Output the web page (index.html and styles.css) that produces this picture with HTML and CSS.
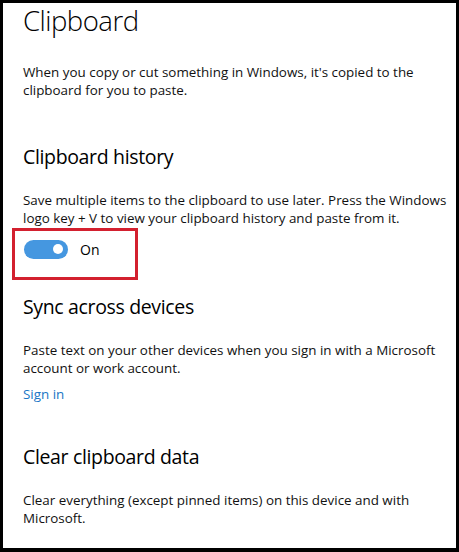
FILE: index.html
```html
<!DOCTYPE html>
<html lang="en">
<head>
<meta charset="utf-8">
<title>Clipboard</title>
<link rel="stylesheet" href="styles.css">
</head>
<body>
<div class="frame">
  <main class="page">
    <h1 class="title">Clipboard</h1>
    <p class="text intro">When you copy or cut something in Windows, it's copied to the clipboard for you to paste.</p>

    <h2 class="heading h-history">Clipboard history</h2>
    <p class="text desc">Save multiple items to the clipboard to use later. Press the Windows logo key + V to view your clipboard history and paste from it.</p>
    <div class="toggle-row">
      <span class="toggle"><span class="knob"></span></span>
      <span class="toggle-label">On</span>
      <span class="highlight"></span>
    </div>

    <h2 class="heading h-sync">Sync across devices</h2>
    <p class="text desc">Paste text on your other devices when you sign in with a Microsoft account or work account.</p>
    <a class="link" href="#">Sign in</a>

    <h2 class="heading h-clear">Clear clipboard data</h2>
    <p class="text desc">Clear everything (except pinned items) on this device and with Microsoft.</p>
  </main>
</div>
</body>
</html>
```
FILE: styles.css
```css
html, body {
  margin: 0;
  padding: 0;
  background: #000;
}
body {
  width: 459px;
  height: 552px;
  overflow: hidden;
  font-family: "Open Sans", "Noto Sans", sans-serif;
  color: #000;
}
.frame {
  box-sizing: border-box;
  width: 459px;
  height: 552px;
  border-style: solid;
  border-color: #000;
  border-width: 3px 3px 4px 3px;
  background: #fff;
  overflow: hidden;
}
.page {
  padding: 0 0 0 20px;
  display: flex;
  flex-direction: column;
  align-items: flex-start;
}
.title {
  margin: 0;
  font-size: 27.5px;
  line-height: 36px;
  font-weight: 300;
  letter-spacing: -0.5px;
}
.text {
  margin: 0;
  max-width: 426px;
  font-size: 13.4px;
  line-height: 18px;
  font-weight: 400;
  color: #111;
}
.intro { margin-top: 24px; }
.heading {
  margin: 0;
  font-size: 19.5px;
  line-height: 26px;
  font-weight: 400;
  letter-spacing: -0.35px;
}
.h-history { margin-top: 45px; }
.h-sync { margin-top: 35px; }
.h-clear { margin-top: 41px; }
.desc { margin-top: 21px; }
.toggle-row {
  position: relative;
  margin-top: 12px;
  margin-left: 1px;
  display: flex;
  align-items: center;
  gap: 12px;
  height: 20px;
}
.toggle {
  box-sizing: border-box;
  width: 44px;
  height: 19px;
  border-radius: 10px;
  background: #4597e0;
  display: flex;
  align-items: center;
  justify-content: flex-end;
  padding-right: 5px;
}
.knob {
  width: 10px;
  height: 10px;
  border-radius: 50%;
  background: #fff;
}
.toggle-label {
  font-size: 14px;
  line-height: 20px;
  padding-top: 1px;
}
.highlight {
  position: absolute;
  left: -12px;
  top: -11px;
  width: 126px;
  height: 52px;
  box-sizing: border-box;
  border: 3px solid #d3202f;
}
.link {
  margin-top: 8px;
  font-size: 13.4px;
  line-height: 18px;
  color: #1a76c6;
  text-decoration: none;
}
```
